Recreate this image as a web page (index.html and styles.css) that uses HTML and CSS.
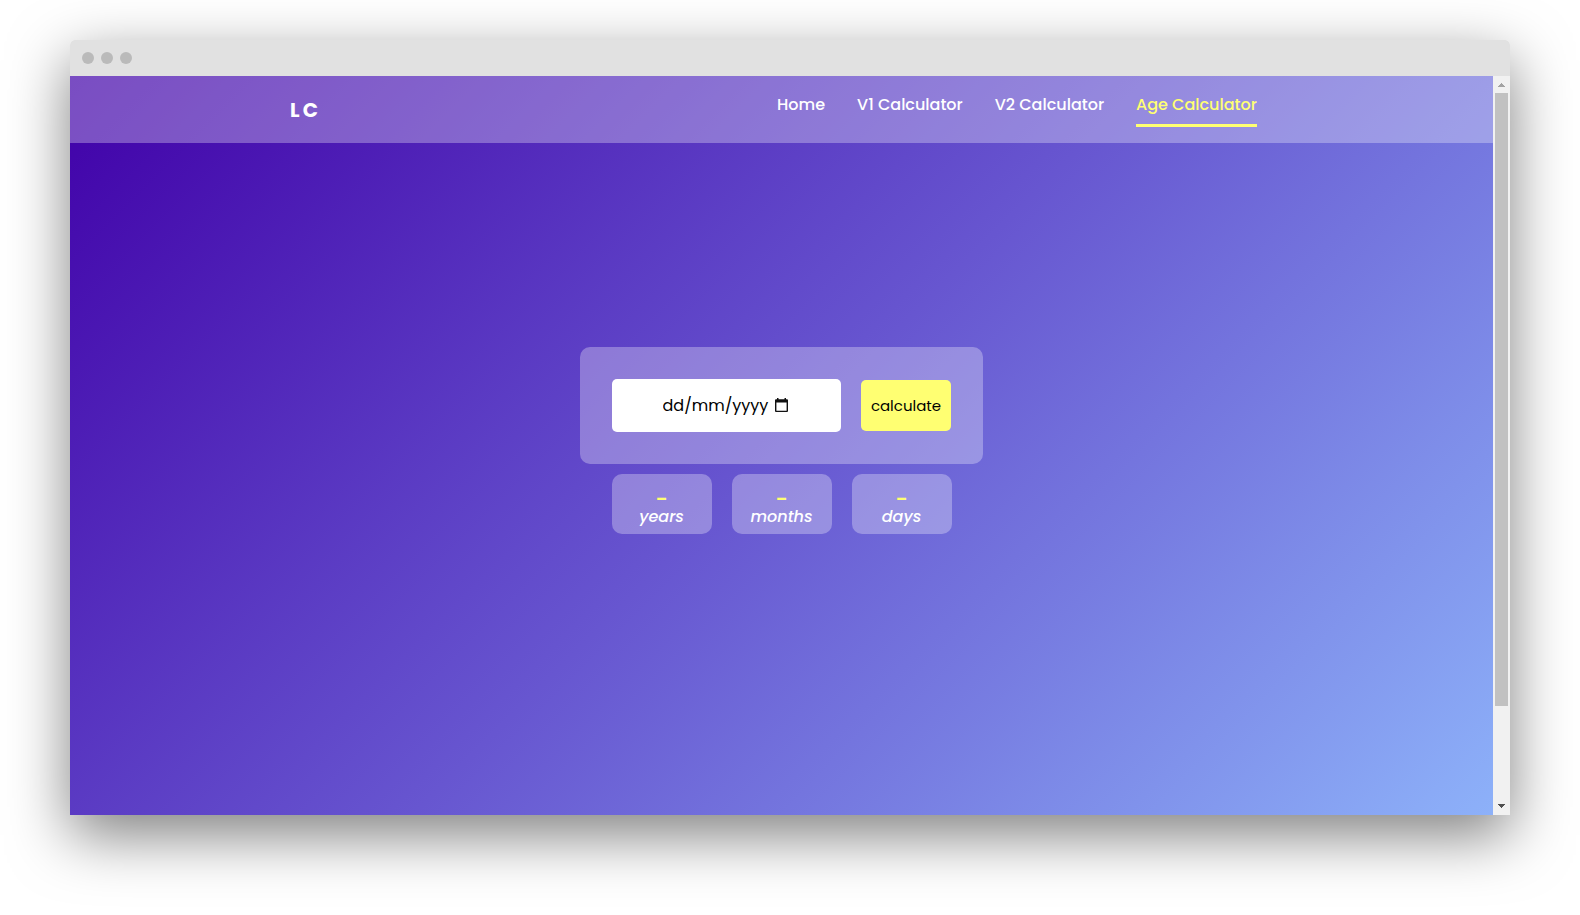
FILE: index.html
```html
<!DOCTYPE html>
<html lang="en">
<head>
<meta charset="utf-8">
<meta name="viewport" content="width=device-width, initial-scale=1">
<title>Age Calculator</title>
<link rel="stylesheet" href="styles.css">
</head>
<body>
<div class="window">
  <div class="titlebar"><span class="dot"></span><span class="dot"></span><span class="dot"></span></div>
  <div class="viewport">
    <div class="page">
      <header class="navbar">
        <a class="logo" href="#">LC</a>
        <nav class="links">
          <a href="#">Home</a>
          <a href="#">V1 Calculator</a>
          <a href="#">V2 Calculator</a>
          <a class="active" href="#" aria-current="page">Age Calculator</a>
        </nav>
      </header>
      <main class="content">
        <form class="card">
          <div class="date-field">
            <input class="date-input" type="text" placeholder="dd/mm/yyyy" aria-label="Date of birth">
            <button class="picker" type="button" aria-label="Open calendar">
              <svg width="13" height="14" viewBox="0 0 13 14"><path d="M2 0h1.500v1.300h6V0H11v1.300h1a1 1 0 0 1 1 1V13a1 1 0 0 1-1 1H1a1 1 0 0 1-1-1V2.300a1 1 0 0 1 1-1h1zM1.400 4.500v8.200h10.200V4.500z" fill="#111" fill-rule="evenodd"/></svg>
            </button>
          </div>
          <button class="submit" type="submit">calculate</button>
        </form>
        <section class="results">
          <div class="result"><strong>–</strong><em>years</em></div>
          <div class="result"><strong>–</strong><em>months</em></div>
          <div class="result"><strong>–</strong><em>days</em></div>
        </section>
      </main>
    </div>
    <div class="scrollbar">
      <svg class="arrow" viewBox="0 0 17 17"><path d="M8 7h1v1h1v1h1v1h1v1H5v-1h1V9h1V8h1z" fill="#a3a3a3"/></svg>
      <div class="track"><div class="thumb"></div></div>
      <svg class="arrow" viewBox="0 0 17 17"><path d="M5 6h7v1h-1v1h-1v1H9v1H8V9H7V8H6V7H5z" fill="#505050"/></svg>
    </div>
  </div>
</div>
</body>
</html>
```
FILE: styles.css
```css
* { box-sizing: border-box; }

body {
  display: flex;
  min-height: 100vh;
  margin: 0;
  padding: 40px 70px 100px;
  background: #fff;
  font-family: Poppins, Inter, sans-serif;
  font-size: 16px;
  line-height: 24px;
}

a { color: inherit; text-decoration: none; }
button, input { border: 0; font: inherit; }

.window {
  display: flex;
  flex: 1;
  flex-direction: column;
  border-radius: 5px 5px 0 0;
  box-shadow: 0 20px 60px rgba(0, 0, 0, 0.5);
}

.titlebar {
  display: flex;
  align-items: center;
  gap: 7px;
  height: 36px;
  padding: 0 12px;
  border-radius: 5px 5px 0 0;
  background: #e1e1e1;
}

.dot {
  width: 12px;
  height: 12px;
  border-radius: 50%;
  background: #bababa;
}

.viewport { display: flex; flex: 1; }

.page {
  flex: 1;
  background: linear-gradient(135deg, #4000a8, #6756d0 50%, #8db1f9);
  color: #fff;
}

.navbar {
  display: flex;
  align-items: center;
  justify-content: space-around;
  height: 67px;
  background: rgba(255, 255, 255, 0.3);
}

.logo {
  font-size: 20px;
  font-weight: 700;
  letter-spacing: 3px;
}

.links {
  display: flex;
  align-self: flex-start;
  gap: 32px;
  padding: 17px 16px 0;
  font-weight: 500;
}

.links a {
  padding-bottom: 7px;
  border-bottom: 3px solid transparent;
}

.links .active {
  border-color: #ffff72;
  color: #ffff72;
}

.content {
  display: flex;
  flex-direction: column;
  align-items: center;
  gap: 10px;
  padding-top: 204px;
}

.card {
  display: flex;
  align-items: center;
  gap: 20px;
  padding: 32px;
  border-radius: 10px;
  background: rgba(255, 255, 255, 0.3);
}

.date-field {
  display: flex;
  align-items: center;
  justify-content: center;
  gap: 5px;
  width: 229px;
  height: 53px;
  padding-right: 3px;
  border-radius: 5px;
  background: #fff;
}

.date-input {
  width: 107px;
  padding: 0;
  background: none;
  color: #000;
  outline: none;
}

.date-input::placeholder { color: #000; opacity: 1; }

.picker {
  display: flex;
  padding: 0 0 2px;
  background: none;
}

.submit {
  width: 90px;
  height: 51px;
  padding: 0;
  border-radius: 5px;
  background: #ffff72;
  color: #000;
  font-size: 15px;
}

.results { display: flex; gap: 20px; }

.result {
  display: flex;
  flex-direction: column;
  align-items: center;
  width: 100px;
  height: 60px;
  padding-top: 16px;
  border-radius: 10px;
  background: rgba(255, 255, 255, 0.3);
  font-weight: 500;
  line-height: 18px;
}

.result strong { color: #ffff72; }

.scrollbar {
  display: flex;
  flex-direction: column;
  width: 17px;
  background: #f1f1f1;
}

.arrow { width: 17px; height: 17px; }

.track { flex: 1; padding: 0 2px; }

.thumb { height: 87%; background: #c1c1c1; }
```
